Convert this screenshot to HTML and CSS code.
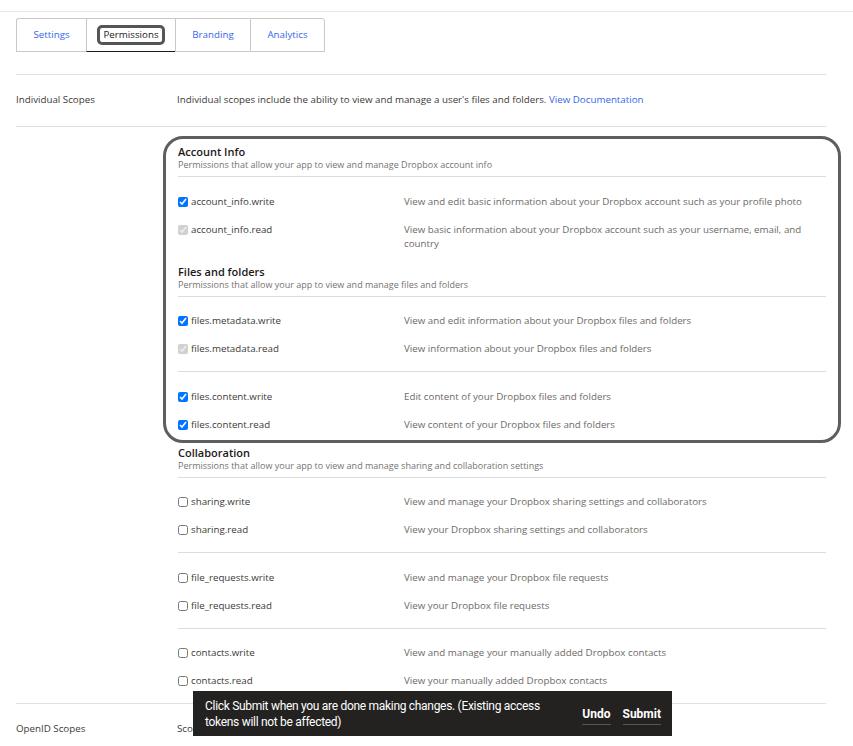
FILE: index.html
```html
<!DOCTYPE html>
<html lang="en">
<head>
<meta charset="utf-8">
<title>Permissions</title>
<link rel="stylesheet" href="styles.css">
</head>
<body>
<div class="topbar"></div>
<nav class="tabs">
  <a class="tab">Settings</a>
  <a class="tab active"><span class="mark">Permissions</span></a>
  <a class="tab">Branding</a>
  <a class="tab">Analytics</a>
</nav>
<main class="content">
  <section class="row intro">
    <div class="label">Individual Scopes</div>
    <div class="body">Individual scopes include the ability to view and manage a user's files and folders. <a class="link">View Documentation</a></div>
  </section>
  <section class="row scopes">
    <div class="label"></div>
    <div class="body">
      <div class="focus">
        <div class="group">
          <h3 class="group-title">Account Info</h3>
          <p class="group-sub">Permissions that allow your app to view and manage Dropbox account info</p>
          <div class="block">
            <div class="scope"><label class="name"><input type="checkbox" checked>account_info.write</label><span class="desc">View and edit basic information about your Dropbox account such as your profile photo</span></div>
            <div class="scope"><label class="name"><input type="checkbox" checked disabled>account_info.read</label><span class="desc">View basic information about your Dropbox account such as your username, email, and country</span></div>
          </div>
        </div>
        <div class="group">
          <h3 class="group-title">Files and folders</h3>
          <p class="group-sub">Permissions that allow your app to view and manage files and folders</p>
          <div class="block">
            <div class="scope"><label class="name"><input type="checkbox" checked>files.metadata.write</label><span class="desc">View and edit information about your Dropbox files and folders</span></div>
            <div class="scope"><label class="name"><input type="checkbox" checked disabled>files.metadata.read</label><span class="desc">View information about your Dropbox files and folders</span></div>
          </div>
          <div class="block">
            <div class="scope"><label class="name"><input type="checkbox" checked>files.content.write</label><span class="desc">Edit content of your Dropbox files and folders</span></div>
            <div class="scope"><label class="name"><input type="checkbox" checked>files.content.read</label><span class="desc">View content of your Dropbox files and folders</span></div>
          </div>
        </div>
      </div>
      <div class="group">
        <h3 class="group-title">Collaboration</h3>
        <p class="group-sub">Permissions that allow your app to view and manage sharing and collaboration settings</p>
        <div class="block">
          <div class="scope"><label class="name"><input type="checkbox">sharing.write</label><span class="desc">View and manage your Dropbox sharing settings and collaborators</span></div>
          <div class="scope"><label class="name"><input type="checkbox">sharing.read</label><span class="desc">View your Dropbox sharing settings and collaborators</span></div>
        </div>
        <div class="block">
          <div class="scope"><label class="name"><input type="checkbox">file_requests.write</label><span class="desc">View and manage your Dropbox file requests</span></div>
          <div class="scope"><label class="name"><input type="checkbox">file_requests.read</label><span class="desc">View your Dropbox file requests</span></div>
        </div>
        <div class="block">
          <div class="scope"><label class="name"><input type="checkbox">contacts.write</label><span class="desc">View and manage your manually added Dropbox contacts</span></div>
          <div class="scope"><label class="name"><input type="checkbox">contacts.read</label><span class="desc">View your manually added Dropbox contacts</span></div>
        </div>
      </div>
    </div>
  </section>
  <section class="row openid">
    <div class="label">OpenID Scopes</div>
    <div class="body">Scopes used to authenticate users and read their basic profile with OpenID Connect.</div>
  </section>
</main>
<div class="snackbar">
  <p class="snack-msg">Click Submit when you are done making changes. (Existing access tokens will not be affected)</p>
  <div class="snack-actions">
    <button class="snack-btn">Undo</button>
    <button class="snack-btn">Submit</button>
  </div>
</div>
</body>
</html>
```
FILE: styles.css
```css
* { box-sizing: border-box; }

body {
  margin: 0;
  font-family: "Open Sans", "Liberation Sans", sans-serif;
  font-size: 9.75px;
  color: #3d3a38;
  background: #fff;
  height: 800px;
}

.topbar {
  height: 12px;
  border-bottom: 1px solid #e8e8e8;
}

.tabs {
  display: flex;
  margin: 6px 0 0 16px;
}

.tab {
  height: 34px;
  display: flex;
  align-items: center;
  justify-content: center;
  border: 1px solid #cbc7c3;
  border-right: none;
  color: #3567ea;
  padding: 0 0 1px;
  line-height: 14px;
}
.tab:first-child { border-top-left-radius: 3px; width: 70px; }
.tab:nth-child(2) { width: 89px; }
.tab:nth-child(3) { width: 75px; }
.tab:last-child { border-right: 1px solid #cbc7c3; border-top-right-radius: 3px; width: 75px; }

.tab.active {
  color: #1e1919;
  border-bottom: 1px solid #1e1919;
}

.mark {
  border: 3px solid #555;
  border-radius: 5px;
  padding: 0 3px;
  line-height: 14px;
  margin-top: 1px;
}

.content {
  margin: 22px 27px 0 16px;
}

.row {
  display: flex;
  border-top: 1px solid #e0e0e0;
}

.label {
  width: 161px;
  flex: none;
  line-height: 14px;
  color: #3d3a38;
}

.body {
  flex: 1;
  line-height: 14px;
}

.link { color: #3567ea; }

.intro { padding: 18px 0 19px; }

.scopes {
  padding: 18px 0 1px;
  border-bottom: 1px solid #e0e0e0;
}
.scopes .body { padding-left: 1px; }

.openid { border-top: none; padding: 18px 0 20px; }

.focus { position: relative; }
.focus::after {
  content: "";
  position: absolute;
  top: -9px;
  left: -15px;
  right: -15px;
  bottom: 3px;
  border: 3px solid #5e5e5e;
  border-radius: 20px;
  pointer-events: none;
}

.group-title {
  margin: 0;
  font-size: 11px;
  font-weight: 600;
  line-height: 14px;
  color: #1e1919;
}

.group-sub {
  margin: 0 0 5px;
  font-size: 9px;
  line-height: 12px;
  color: #777370;
}

.block {
  border-top: 1px solid #dcdcdc;
  padding: 10.5px 0 8px;
}
.block:last-child { padding-bottom: 7px; }

.scope {
  display: grid;
  grid-template-columns: 226px 1fr;
  padding: 7px 0;
  line-height: 14px;
}

.name {
  display: flex;
  align-items: center;
  height: 14px;
  color: #3d3a38;
}

.name input {
  width: 10px;
  height: 10px;
  margin: 0 3px 0 0;
}

.desc {
  color: #6e6a67;
}

.snackbar {
  position: fixed;
  left: 193px;
  bottom: 10px;
  width: 479px;
  height: 45px;
  background: #232221;
  color: #fff;
  display: flex;
  align-items: center;
  padding: 0 11px 0 12px;
  font-family: "Roboto", "Liberation Sans", sans-serif;
  font-size: 12px;
  letter-spacing: -0.3px;
}

.snack-msg {
  margin: 0;
  width: 350px;
  line-height: 16px;
}

.snack-actions {
  margin-left: auto;
  display: flex;
  gap: 12px;
}

.snack-btn {
  background: none;
  border: none;
  border-bottom: 1px solid #555;
  color: #fff;
  font: inherit;
  font-weight: bold;
  padding: 0 0 3px;
  line-height: 14px;
  margin-top: 4px;
}
```
